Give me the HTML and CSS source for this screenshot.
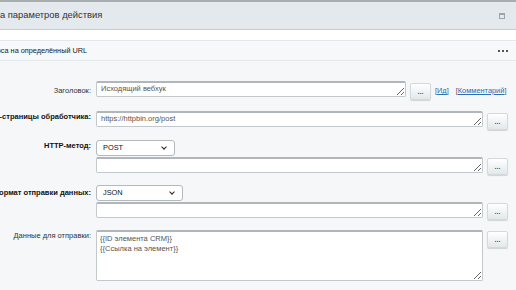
FILE: index.html
```html
<!DOCTYPE html>
<html lang="ru">
<head>
    <meta charset="UTF-8">
    <title>Настройка параметров действия</title>
    <link rel="stylesheet" href="styles.css">
</head>
<body>
    <div class="dialog">
        <div class="dialog-head">
            <div class="dialog-title">Настройка параметров действия</div>
            <span class="btn-maximize"></span>
        </div>

        <div class="dialog-gap"></div>

        <div class="section-head">
            <div class="section-title">Отправка запроса на определённый URL</div>
            <span class="section-more"><i></i><i></i><i></i></span>
        </div>

        <div class="form">
            <div class="row row-first">
                <div class="label label-low">Заголовок:</div>
                <div class="field">
                    <div class="line">
                        <textarea class="input input-short" rows="1">Исходящий вебхук</textarea>
                        <button class="btn-dots">...</button>
                        <span class="links">[<a href="#">Ид</a>]<span class="sp"></span>[<a href="#">Комментарий</a>]</span>
                    </div>
                </div>
            </div>

            <div class="row">
                <div class="label bold">URL-страницы обработчика:</div>
                <div class="field">
                    <div class="line">
                        <textarea class="input" rows="1">https://httpbin.org/post</textarea>
                        <button class="btn-dots">...</button>
                    </div>
                </div>
            </div>

            <div class="row">
                <div class="label bold">HTTP-метод:</div>
                <div class="field">
                    <div class="select select-method">POST<span class="chev"></span></div>
                    <div class="line line-under">
                        <textarea class="input" rows="1"></textarea>
                        <button class="btn-dots">...</button>
                    </div>
                </div>
            </div>

            <div class="row">
                <div class="label bold label-mid">Формат отправки данных:</div>
                <div class="field">
                    <div class="select select-format">JSON<span class="chev"></span></div>
                    <div class="line line-under">
                        <textarea class="input" rows="1"></textarea>
                        <button class="btn-dots">...</button>
                    </div>
                </div>
            </div>

            <div class="row">
                <div class="label">Данные для отправки:</div>
                <div class="field">
                    <div class="line line-under">
                        <textarea class="input input-big">{{ID элемента CRM}}
{{Ссылка на элемент}}</textarea>
                        <button class="btn-dots">...</button>
                    </div>
                </div>
            </div>
        </div>
    </div>
</body>
</html>
```

FILE: styles.css
```css
* {
    margin: 0;
    padding: 0;
    box-sizing: border-box;
}

body {
    font-family: "Liberation Sans", Arial, sans-serif;
    background: #f5f7f8;
    overflow: hidden;
    width: 516px;
    height: 290px;
}

.dialog {
    margin-left: -100px;
    width: 616px;
    border-top: 2px solid #a8adb0;
}

.dialog-head {
    height: 28px;
    background: #e3e9ec;
    border-bottom: 1px solid #c5cdd1;
    display: flex;
    align-items: center;
    justify-content: space-between;
    padding-left: 59px;
    padding-right: 11px;
    padding-bottom: 2px;
}

.dialog-title {
    font-size: 9.4px;
    color: #333;
    white-space: nowrap;
}

.btn-maximize {
    width: 6px;
    height: 6px;
    margin-top: 3px;
    border: 1px solid #9ba6ac;
    border-top-width: 2px;
}

.dialog-gap {
    height: 10px;
    background: #fff;
}

.section-head {
    height: 21px;
    background: #f6f8f9;
    border-top: 1px solid #e4e9eb;
    border-bottom: 1px solid #e4e9eb;
    display: flex;
    align-items: center;
    justify-content: space-between;
    padding-left: 47px;
    padding-right: 8px;
}

.section-title {
    font-size: 7.3px;
    color: #222;
    white-space: nowrap;
}

.section-more {
    display: flex;
    gap: 2px;
}

.section-more i {
    width: 2px;
    height: 2px;
    background: #555;
}

.form {
    padding-top: 20px;
}

.row {
    display: flex;
    gap: 5px;
    margin-bottom: 10px;
}

.row-first {
    margin-bottom: 11px;
}

.label {
    width: 191px;
    flex-shrink: 0;
    text-align: right;
    font-size: 7.5px;
    color: #333;
    padding-top: 1px;
    white-space: nowrap;
}

.label.bold {
    font-weight: bold;
    color: #111;
}

.label-low {
    padding-top: 5px;
}

.label-mid {
    padding-top: 3px;
}

.field {
    display: flex;
    flex-direction: column;
    gap: 1px;
}

.line {
    display: flex;
    align-items: flex-start;
    gap: 4px;
}

.input {
    width: 387px;
    height: 16px;
    border: 1px solid #c3c8cb;
    border-top: 2px solid #b0b6ba;
    border-radius: 2px;
    background: #fff;
    font-family: "Liberation Sans", Arial, sans-serif;
    font-size: 7.5px;
    color: #555;
    padding: 1px 4px;
    line-height: 10px;
    overflow: hidden;
    resize: vertical;
}

.input-short {
    width: 310px;
}

.input-big {
    height: 51px;
    padding: 2px 3px;
}

.btn-dots {
    width: 21px;
    height: 17px;
    margin-top: 2px;
    border: 1px solid #d3d9dc;
    border-radius: 2px;
    background: linear-gradient(#ffffff, #e2e8eb);
    box-shadow: 0 1px 1px rgba(0, 0, 0, 0.15);
    font-size: 7px;
    font-weight: bold;
    color: #555;
    line-height: 8px;
    font-family: "Liberation Sans", Arial, sans-serif;
}

.line-under .btn-dots {
    margin-top: 1px;
}

.links {
    font-size: 7.4px;
    color: #555;
    padding-top: 5px;
    white-space: nowrap;
}

.links a {
    color: #2a6db8;
}

.sp {
    display: inline-block;
    width: 7px;
}

.select {
    position: relative;
    height: 16px;
    border: 1px solid #b3b9bd;
    border-radius: 3px;
    background: #fff;
    font-size: 7.4px;
    color: #111;
    padding: 2px 6px;
    line-height: 10px;
}

.select-method {
    width: 79px;
}

.select-format {
    width: 87px;
}

.chev {
    position: absolute;
    right: 8px;
    top: 4px;
    width: 4px;
    height: 4px;
    border-right: 1.5px solid #222;
    border-bottom: 1.5px solid #222;
    transform: rotate(45deg);
}
```
